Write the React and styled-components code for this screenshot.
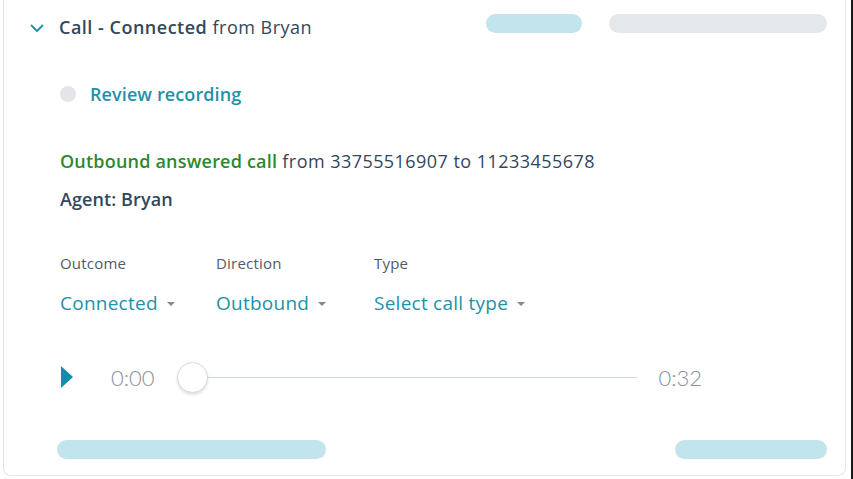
import React from "react";
import styled, { createGlobalStyle } from "styled-components";

const GlobalStyle = createGlobalStyle`
  html, body {
    margin: 0;
    padding: 0;
    background: #ffffff;
  }
  body {
    font-family: "Open Sans", "Liberation Sans", sans-serif;
    color: #33475b;
  }
`;

const Page = styled.div`
  width: 853px;
  height: 479px;
  padding: 0 5px 3px 3px;
  border-right: 2px solid #1b1b1b;
  box-sizing: border-box;
`;

const Card = styled.section`
  height: 100%;
  box-sizing: border-box;
  border: 1px solid #e3e7ec;
  border-top: none;
  border-radius: 0 0 8px 8px;
  background: #fff;
  padding: 0 18px 0 26px;
  display: flex;
  flex-direction: column;
`;

const Header = styled.div`
  height: 54px;
  display: flex;
  align-items: center;
  gap: 15px;
`;

const Title = styled.h3`
  margin: 0;
  font-size: 18px;
  font-weight: 400;
  letter-spacing: 0.5px;
  color: #33475b;
  flex: 1;
  b {
    font-weight: 600;
  }
`;

const PillRow = styled.div`
  display: flex;
  align-self: flex-start;
  margin-top: 14px;
  gap: 27px;
`;

const Pill = styled.div`
  width: ${(p) => p.$w}px;
  height: 19px;
  border-radius: 10px;
  background: ${(p) => (p.$grey ? "#e5e8eb" : "#c2e4ec")};
`;

const Body = styled.div`
  padding-left: 30px;
  display: flex;
  flex-direction: column;
  flex: 1;
`;

const ReviewRow = styled.div`
  display: flex;
  align-items: center;
  gap: 14px;
  margin-top: 28px;
  height: 24px;
`;

const Dot = styled.span`
  width: 16px;
  height: 16px;
  border-radius: 50%;
  background: #e3e5e8;
`;

const LinkText = styled.a`
  color: #2191a9;
  font-size: 18px;
  font-weight: 600;
  letter-spacing: 0.1px;
  text-decoration: none;
`;

const Line = styled.p`
  margin: ${(p) => p.$mt}px 0 0;
  font-size: 18px;
  line-height: 24px;
  letter-spacing: ${(p) => (p.$strong ? 0.1 : 0.45)}px;
  font-weight: ${(p) => (p.$strong ? 600 : 400)};
  color: #33475b;
`;

const Green = styled.span`
  color: #2c8a2e;
  font-weight: 600;
  letter-spacing: 0.2px;
`;

const Fields = styled.div`
  display: flex;
  margin-top: 42px;
`;

const Field = styled.div`
  width: ${(p) => p.$w}px;
  display: flex;
  flex-direction: column;
`;

const Label = styled.span`
  font-size: 15px;
  letter-spacing: 0.2px;
  color: #4f5b66;
  line-height: 20px;
`;

const Select = styled.button`
  margin-top: 17px;
  padding: 0;
  border: none;
  background: none;
  font-family: inherit;
  font-size: 19px;
  letter-spacing: 0.25px;
  color: #2191a9;
  display: flex;
  align-items: center;
  gap: 9px;
  cursor: pointer;
  &::after {
    content: "";
    border-left: 4px solid transparent;
    border-right: 4px solid transparent;
    border-top: 4px solid #7f8a96;
    margin-top: 2px;
  }
`;

const Player = styled.div`
  display: flex;
  align-items: center;
  margin-top: 45px;
  height: 32px;
`;

const PlayButton = styled.button`
  width: 14px;
  height: 22px;
  padding: 0;
  border: none;
  background: none;
  cursor: pointer;
  margin-right: 37px;
  svg {
    display: block;
  }
`;

const Time = styled.span`
  font-family: "Lato", "Liberation Sans", sans-serif;
  font-size: 22px;
  font-weight: 300;
  color: #8a9098;
  letter-spacing: 0px;
`;

const Track = styled.div`
  position: relative;
  width: 460px;
  height: 1px;
  background: #cfd7df;
  margin: 0 22px;
`;

const Thumb = styled.span`
  position: absolute;
  left: 0;
  top: -15px;
  width: 29px;
  height: 29px;
  border-radius: 50%;
  background: #fff;
  border: 1px solid #d6dbe0;
  box-shadow: 0 2px 3px rgba(0, 0, 0, 0.12);
`;

const Footer = styled.div`
  margin-top: auto;
  margin-bottom: 16px;
  margin-left: -3px;
  display: flex;
  justify-content: space-between;
`;

export default function App() {
  return (
    <>
      <GlobalStyle />
      <Page>
        <Card>
          <Header>
            <svg width="14" height="9" viewBox="0 0 14 9" style={{ marginTop: 2 }}>
              <path d="M1.5 1.5 L7 7 L12.5 1.5" fill="none" stroke="#2191a9" strokeWidth="1.8" strokeLinecap="round" strokeLinejoin="round" />
            </svg>
            <Title>
              <b>Call - Connected</b> from Bryan
            </Title>
            <PillRow>
              <Pill $w={96} />
              <Pill $w={218} $grey />
            </PillRow>
          </Header>
          <Body>
            <ReviewRow>
              <Dot />
              <LinkText href="#">Review recording</LinkText>
            </ReviewRow>
            <Line $mt={43}>
              <Green>Outbound answered call</Green> from 33755516907 to 11233455678
            </Line>
            <Line $mt={14} $strong>
              Agent: Bryan
            </Line>
            <Fields>
              <Field $w={156}>
                <Label>Outcome</Label>
                <Select>Connected</Select>
              </Field>
              <Field $w={158}>
                <Label>Direction</Label>
                <Select>Outbound</Select>
              </Field>
              <Field $w={200}>
                <Label>Type</Label>
                <Select>Select call type</Select>
              </Field>
            </Fields>
            <Player>
              <PlayButton aria-label="Play">
                <svg width="14" height="22" viewBox="0 0 14 22">
                  <path d="M1 0 L13 11 L1 22 Z" fill="#0f8fa9" />
                </svg>
              </PlayButton>
              <Time>0:00</Time>
              <Track>
                <Thumb />
              </Track>
              <Time>0:32</Time>
            </Player>
            <Footer>
              <Pill $w={269} />
              <Pill $w={152} />
            </Footer>
          </Body>
        </Card>
      </Page>
    </>
  );
}
